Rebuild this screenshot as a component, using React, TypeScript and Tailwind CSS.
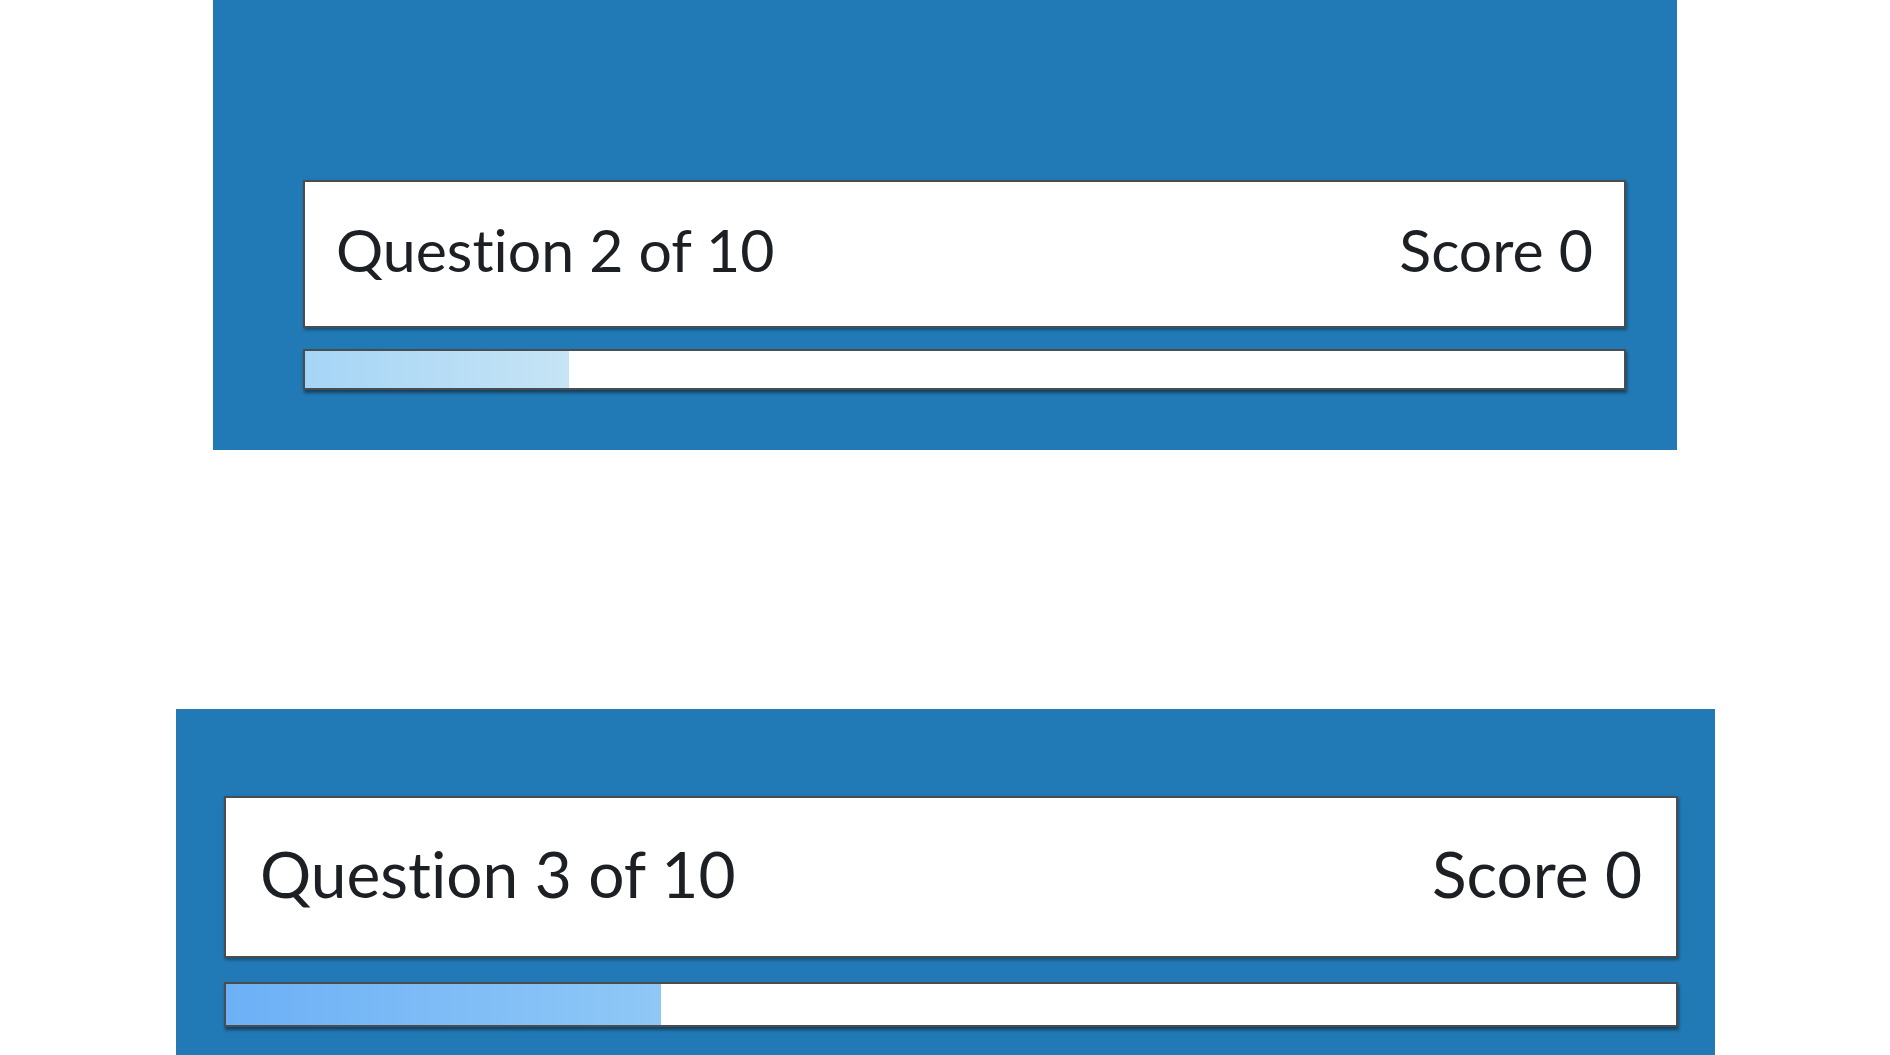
import React from 'react';

type QuizHeaderProps = {
  question: number;
  total: number;
  score: number;
  scale: 'sm' | 'lg';
};

const QuizHeader: React.FC<QuizHeaderProps> = ({ question, total, score, scale }) => {
  const pct = (question / total) * 100;
  const big = scale === 'lg';

  return (
    <div className="flex flex-col">
      <div
        className={
          big
            ? 'flex h-[162px] w-[1454px] items-center justify-between border-2 border-[#4a4d50] bg-white px-[34px] pb-[6px] text-[64px] text-[#1c1f23] shadow-[1px_2px_3px_rgba(0,0,0,0.35)]'
            : 'flex h-[148px] w-[1323px] items-center justify-between border-2 border-[#4a4d50] bg-white px-[31px] pb-[8px] text-[59px] text-[#1c1f23] shadow-[1px_2px_3px_rgba(0,0,0,0.35)]'
        }
      >
        <span>Question {question} of {total}</span>
        <span>Score {score}</span>
      </div>
      <div
        className={
          big
            ? 'mt-[24px] h-[45px] w-[1454px] border-2 border-[#4a4d50] bg-white shadow-[1px_3px_3px_rgba(0,0,0,0.45)]'
            : 'mt-[21px] h-[41px] w-[1323px] border-2 border-[#4a4d50] bg-white shadow-[1px_3px_3px_rgba(0,0,0,0.45)]'
        }
      >
        <div
          className={
            big
              ? 'h-full bg-gradient-to-r from-[#6cb0f6] to-[#8fc8f6]'
              : 'h-full bg-gradient-to-r from-[#a5d5f6] to-[#c6e4f5]'
          }
          style={{ width: `${pct}%` }}
        />
      </div>
    </div>
  );
};

export default function App() {
  return (
    <div className="h-[1055px] w-[1890px] overflow-hidden bg-white font-['Lato',sans-serif] [font-variant-ligatures:none]">
      <div className="ml-[213px] h-[450px] w-[1464px] bg-[#2179b5] pl-[90px] pt-[180px]">
        <QuizHeader question={2} total={10} score={0} scale="sm" />
      </div>
      <div className="ml-[176px] mt-[259px] h-[346px] w-[1539px] bg-[#2179b5] pl-[48px] pt-[87px]">
        <QuizHeader question={3} total={10} score={0} scale="lg" />
      </div>
    </div>
  );
}
